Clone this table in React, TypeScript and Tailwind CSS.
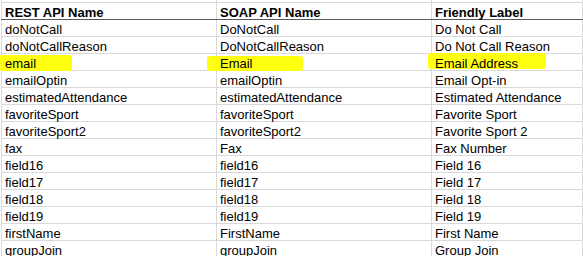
import React from 'react'

const rows = [
    ['doNotCall', 'DoNotCall', 'Do Not Call'],
    ['doNotCallReason', 'DoNotCallReason', 'Do Not Call Reason'],
    ['email', 'Email', 'Email Address'],
    ['emailOptin', 'emailOptin', 'Email Opt-in'],
    ['estimatedAttendance', 'estimatedAttendance', 'Estimated Attendance'],
    ['favoriteSport', 'favoriteSport', 'Favorite Sport'],
    ['favoriteSport2', 'favoriteSport2', 'Favorite Sport 2'],
    ['fax', 'Fax', 'Fax Number'],
    ['field16', 'field16', 'Field 16'],
    ['field17', 'field17', 'Field 17'],
    ['field18', 'field18', 'Field 18'],
    ['field19', 'field19', 'Field 19'],
    ['firstName', 'FirstName', 'First Name'],
    ['groupJoin', 'groupJoin', 'Group Join'],
]

// yellow marker strokes on the email row, one per column
const marks = [
    'left-[-3px] top-[1px] w-[73px] h-[16px]',
    'left-[-10px] top-[2px] w-[96px] h-[15px]',
    'left-[-4px] top-[-1px] w-[118px] h-[16px]',
]

const widths = ['w-[216px] border-l', 'w-[215px]', 'w-[151px]']

function Cell({ text, col, bold, mark }: { text: string; col: number; bold?: boolean; mark?: boolean }) {
    return (
        <div className={`relative h-full border-r border-[#d9d9d9] pl-[3px] ${widths[col]}`}>
            {mark && (
                <div className={`absolute rounded-[3px] bg-[#ffff10] blur-[0.6px] ${marks[col]}`} />
            )}
            <span className={`relative z-10 whitespace-nowrap leading-[16px] ${bold ? 'font-bold' : ''}`}>
                {text}
            </span>
        </div>
    )
}

export default function App() {
    return (
        <div
            className="w-[583px] h-[256px] overflow-hidden bg-white text-[13px] text-black"
            style={{ fontFamily: '"Liberation Sans", Arial, sans-serif' }}
        >
            <div className="ml-px flex h-[3px] border-b border-[#d9d9d9]">
                <Cell text="" col={0} />
                <Cell text="" col={1} />
                <Cell text="" col={2} />
            </div>
            <div className="ml-px flex h-[17px] border-b border-[#5a5a5a]">
                <Cell text="REST API Name" col={0} bold />
                <Cell text="SOAP API Name" col={1} bold />
                <Cell text="Friendly Label" col={2} bold />
            </div>
            {rows.map((r) => (
                <div key={r[0]} className="ml-px flex h-[17px] border-b border-[#d9d9d9]">
                    {r.map((t, i) => (
                        <Cell key={i} text={t} col={i} mark={r[0] === 'email'} />
                    ))}
                </div>
            ))}
        </div>
    )
}
